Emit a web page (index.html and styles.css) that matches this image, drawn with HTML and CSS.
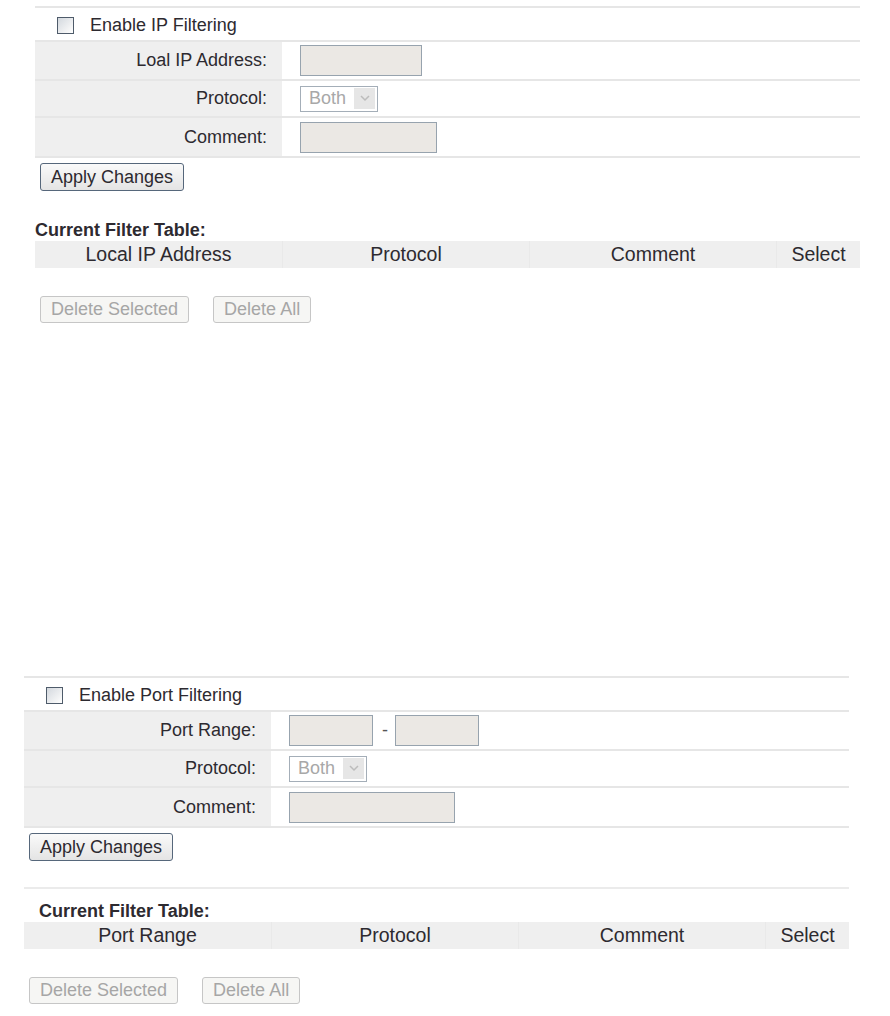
FILE: index.html
```html
<!DOCTYPE html>
<html lang="en">
<head>
    <meta charset="UTF-8">
    <title>IP / Port Filtering</title>
    <link rel="stylesheet" href="styles.css">
</head>
<body>
    <div class="filter filter-ip">
        <div class="enable-row">
            <span class="checkbox"></span>
            <span class="enable-text">Enable IP Filtering</span>
        </div>
        <div class="form-row row-a">
            <div class="label">Loal IP Address:</div>
            <div class="value"><input class="field field-ip" type="text" disabled></div>
        </div>
        <div class="form-row row-b">
            <div class="label">Protocol:</div>
            <div class="value">
                <span class="select">
                    <span class="select-text">Both</span>
                    <span class="select-arrow"><svg width="10" height="7" viewBox="0 0 10 7"><path d="M1 1 L5 5 L9 1" fill="none" stroke="#bcbcbc" stroke-width="1.5"/></svg></span>
                </span>
            </div>
        </div>
        <div class="form-row row-c">
            <div class="label">Comment:</div>
            <div class="value"><input class="field field-comment" type="text" disabled></div>
        </div>
        <div class="actions apply">
            <button class="btn">Apply Changes</button>
        </div>
        <div class="table-title">Current Filter Table:</div>
        <div class="thead">
            <div class="th">Local IP Address</div>
            <div class="th">Protocol</div>
            <div class="th">Comment</div>
            <div class="th">Select</div>
        </div>
        <div class="actions delete">
            <button class="btn btn-off" disabled>Delete Selected</button>
            <button class="btn btn-off" disabled>Delete All</button>
        </div>
    </div>

    <div class="filter filter-port">
        <div class="enable-row">
            <span class="checkbox"></span>
            <span class="enable-text">Enable Port Filtering</span>
        </div>
        <div class="form-row row-a">
            <div class="label">Port Range:</div>
            <div class="value">
                <input class="field field-port" type="text" disabled>
                <span class="dash">-</span>
                <input class="field field-port" type="text" disabled>
            </div>
        </div>
        <div class="form-row row-b">
            <div class="label">Protocol:</div>
            <div class="value">
                <span class="select">
                    <span class="select-text">Both</span>
                    <span class="select-arrow"><svg width="10" height="7" viewBox="0 0 10 7"><path d="M1 1 L5 5 L9 1" fill="none" stroke="#bcbcbc" stroke-width="1.5"/></svg></span>
                </span>
            </div>
        </div>
        <div class="form-row row-c">
            <div class="label">Comment:</div>
            <div class="value"><input class="field field-comment-wide" type="text" disabled></div>
        </div>
        <div class="actions apply">
            <button class="btn">Apply Changes</button>
        </div>
        <div class="table-title lined">Current Filter Table:</div>
        <div class="thead">
            <div class="th">Port Range</div>
            <div class="th">Protocol</div>
            <div class="th">Comment</div>
            <div class="th">Select</div>
        </div>
        <div class="actions delete">
            <button class="btn btn-off" disabled>Delete Selected</button>
            <button class="btn btn-off" disabled>Delete All</button>
        </div>
    </div>
</body>
</html>
```

FILE: styles.css
```css
body{
    margin: 0;
    background: #ffffff;
    font-family: "Liberation Sans", Arial, sans-serif;
    font-size: 18px;
    color: #2d2a30;
}

.filter{
    width: 825px;
}

.filter-ip{
    margin: 6px 0 0 35px;
}

.filter-port{
    margin: 353px 0 0 24px;
}

.enable-row{
    border-top: 2px solid #e6e6e6;
    height: 34px;
    display: flex;
    align-items: center;
    padding-left: 22px;
    box-sizing: border-box;
    padding-top: 2px;
}

.checkbox{
    width: 15px;
    height: 15px;
    border: 1px solid #4e5b6a;
    background: linear-gradient(135deg, #d3d8de 0%, #f2f3f4 70%, #ffffff 100%);
    margin-right: 16px;
}

.form-row{
    display: grid;
    grid-template-columns: 247px 1fr;
    border-top: 2px solid #e6e6e6;
    box-sizing: border-box;
}

.row-a{ height: 39px; }
.row-b{ height: 37px; }
.row-c{ height: 42px; border-bottom: 2px solid #e6e6e6; }

.label{
    background: #efefef;
    text-align: right;
    padding-right: 15px;
    display: flex;
    align-items: center;
    justify-content: flex-end;
}

.value{
    display: flex;
    align-items: center;
    padding-left: 18px;
}

.field{
    box-sizing: border-box;
    height: 31px;
    border: 1px solid #97a3ae;
    background: #ebe8e4;
    margin: 0;
    padding: 0;
}

.field-ip{ width: 122px; }
.field-comment{ width: 137px; }
.field-comment-wide{ width: 166px; }
.field-port{ width: 84px; }

.dash{
    margin: 0 7px 0 9px;
    color: #555;
}

.select{
    box-sizing: border-box;
    width: 78px;
    height: 26px;
    border: 1px solid #a4aeb8;
    background: #ffffff;
    display: flex;
    align-items: center;
    justify-content: space-between;
    padding: 0 2px 0 8px;
}

.select-text{
    color: #a8a8a8;
}

.select-arrow{
    width: 21px;
    height: 21px;
    background: #e6e6e6;
    display: flex;
    align-items: center;
    justify-content: center;
}

.actions{
    display: flex;
    gap: 24px;
    padding-left: 5px;
}

.apply{
    margin-top: 5px;
}

.delete{
    margin-top: 28px;
}

.btn{
    font-family: "Liberation Sans", Arial, sans-serif;
    font-size: 18px;
    color: #2d2a30;
    height: 28px;
    padding: 0 10px;
    border: 1px solid #56677b;
    border-radius: 3px;
    background: linear-gradient(#fafafa, #e4e4e4);
}

.btn-off{
    height: 27px;
    color: #a6a6a6;
    border-color: #c6c6c6;
    background: #f6f6f4;
}

.table-title{
    font-weight: bold;
    line-height: 22px;
    margin-top: 28px;
}

.table-title.lined{
    border-top: 2px solid #ebebeb;
    margin-top: 26px;
    padding: 11px 0 0 15px;
}

.thead{
    display: grid;
    grid-template-columns: 247px 247px 247px 84px;
    height: 27px;
    background: #efefef;
}

.th{
    font-size: 19.5px;
    text-align: center;
    line-height: 27px;
    border-left: 1px solid #e9e9e9;
}

.th:first-child{
    border-left: none;
}
```
